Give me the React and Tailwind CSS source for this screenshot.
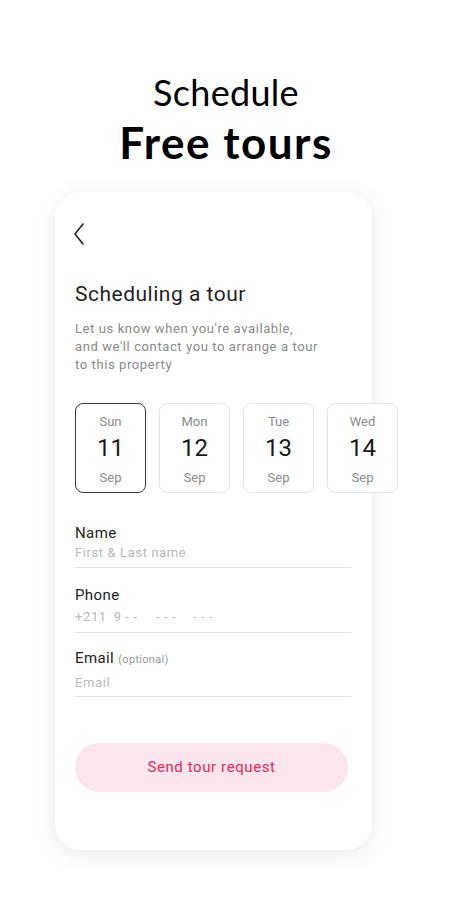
import React from "react";

const days = [
  { d: "Sun", n: "11", sel: true },
  { d: "Mon", n: "12" },
  { d: "Tue", n: "13" },
  { d: "Wed", n: "14" },
];

export default function App() {
  return (
    <div className="w-[452px] h-[900px] bg-white overflow-hidden" style={{ fontFamily: "Lato, 'Open Sans', sans-serif" }}>
      <div className="pt-[72px] flex flex-col items-center text-black">
        <div className="text-[36px] leading-[40px] font-normal tracking-[0.3px]">Schedule</div>
        <div className="text-[44px] leading-[48px] font-bold mt-[6px] tracking-[1.5px]">Free tours</div>
      </div>
      <div
        className="ml-[55px] mt-[26px] w-[317px] h-[658px] bg-white rounded-[26px] shadow-[0_4px_24px_rgba(0,0,0,0.09)] pl-[20px] pt-[31px]"
        style={{ fontFamily: "Roboto, 'Open Sans', sans-serif" }}
      >
        <svg width="12" height="22" viewBox="0 0 12 22" className="-ml-[2px]">
          <path d="M10 1 L2 11 L10 21" fill="none" stroke="#222" strokeWidth="1.6" strokeLinecap="round" strokeLinejoin="round" />
        </svg>
        <div className="mt-[37px] text-[21px] leading-[24px] text-[#1f1f1f] tracking-[0.5px]">Scheduling a tour</div>
        <div className="mt-[14px] text-[13px] leading-[18px] text-[#8a8a8a] w-[280px] tracking-[0.6px]">
          Let us know when you're available,
          <br />
          and we'll contact you to arrange a tour
          <br />
          to this property
        </div>
        <div className="mt-[29px] flex gap-[13px] w-[340px]">
          {days.map((x) => (
            <div
              key={x.n}
              className={
                "shrink-0 w-[71px] h-[90px] rounded-[8px] bg-white flex flex-col items-center pt-[10px] " +
                (x.sel ? "border-[1.5px] border-[#3a3a3a]" : "border border-[#e4e4e4]")
              }
            >
              <div className="text-[13px] leading-[16px] text-[#8c8c8c]">{x.d}</div>
              <div className="mt-[4px] text-[24px] leading-[28px] text-[#1a1a1a]">{x.n}</div>
              <div className="mt-[8px] text-[13px] leading-[16px] text-[#8c8c8c]">Sep</div>
            </div>
          ))}
        </div>
        <div className="w-[276px] mt-[31px]">
          <div className="text-[15px] leading-[18px] text-[#222] tracking-[0.4px]">Name</div>
          <div className="mt-[3px] text-[13px] leading-[16px] text-[#b9b9b9] tracking-[0.6px]">First &amp; Last name</div>
          <div className="mt-[6px] h-px bg-[#e2e2e2]" />
          <div className="mt-[18px] text-[15px] leading-[18px] text-[#222] tracking-[0.4px]">Phone</div>
          <div className="mt-[5px] flex text-[13px] leading-[16px] text-[#b9b9b9] tracking-[0.6px] whitespace-pre">
            <span>+211</span>
            <span className="ml-[7px]">9 - -</span>
            <span className="ml-[18px]">- - -</span>
            <span className="ml-[17px]">- - -</span>
          </div>
          <div className="mt-[7px] h-px bg-[#e2e2e2]" />
          <div className="mt-[16px] text-[15px] leading-[18px] text-[#222] tracking-[0.4px]">
            Email <span className="text-[11px] text-[#9a9a9a] tracking-[0.3px]">(optional)</span>
          </div>
          <div className="mt-[6px] text-[13px] leading-[16px] text-[#b9b9b9] tracking-[0.6px]">Email</div>
          <div className="mt-[5px] h-px bg-[#e2e2e2]" />
        </div>
        <div className="mt-[46px] w-[273px] h-[49px] rounded-full bg-[#fde5ee] flex items-center justify-center text-[15px] text-[#e6285a] tracking-[0.6px]">
          Send tour request
        </div>
      </div>
    </div>
  );
}
